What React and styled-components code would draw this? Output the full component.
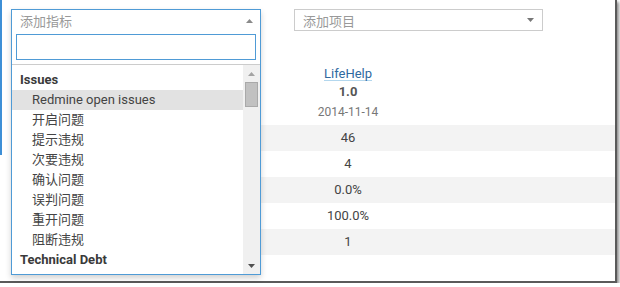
import React from 'react';
import styled, { createGlobalStyle } from 'styled-components';

const Global = createGlobalStyle`
  html, body { margin: 0; padding: 0; background: #fff; }
  body {
    font-family: Roboto, "Noto Sans CJK SC", sans-serif;
    font-size: 13px;
    color: #444;
  }
  * { box-sizing: border-box; }
`;

const Frame = styled.div`
  position: relative;
  width: 617px;
  height: 283px;
  display: flex;
  align-items: flex-start;
  background: #fff;
  border-right: 2px solid #5a5a5a;
  border-bottom: 2px solid #5a5a5a;
  box-shadow: 2px 2px 3px rgba(0, 0, 0, 0.45);
`;

const Accent = styled.div`
  width: 2px;
  height: 155px;
  flex-shrink: 0;
  background: #3d8fd6;
`;

const Content = styled.div`
  flex: 1;
  display: flex;
  flex-direction: column;
  padding: 9px 0 0 9px;
`;

const Toolbar = styled.div`
  display: flex;
  gap: 33px;
`;

const Picker = styled.div`
  position: relative;
  width: ${(p) => p.$w}px;
  height: 22px;
`;

const SelectBox = styled.div`
  width: 100%;
  height: 22px;
  border: 1px solid #ccc;
  display: flex;
  align-items: center;
  justify-content: space-between;
  padding: 0 8px;
  color: #999;
  background: #fff;
`;

const Dropdown = styled.div`
  position: absolute;
  top: 0;
  left: 0;
  width: 100%;
  border: 1px solid #4f9bd6;
  background: #fff;
  box-shadow: 0 3px 6px rgba(0, 0, 0, 0.18);
  z-index: 10;
`;

const DropHeader = styled.div`
  height: 21px;
  display: flex;
  align-items: center;
  justify-content: space-between;
  padding: 0 7px 0 8px;
  color: #999;
`;

const SearchWrap = styled.div`
  padding: 3px 4px 4px;
  border-bottom: 1px solid #ccc;
`;

const SearchInput = styled.input`
  display: block;
  width: 100%;
  height: 26px;
  border: 1px solid #4f9bd6;
  outline: none;
  padding: 0 4px;
  font: inherit;
`;

const ListArea = styled.div`
  display: flex;
  height: 209px;
`;

const Options = styled.ul`
  flex: 1;
  margin: 0;
  padding: 5px 0 0;
  list-style: none;
  overflow: hidden;
`;

const Option = styled.li`
  height: 20px;
  line-height: 20px;
  padding-left: ${(p) => (p.$group ? 8 : 20)}px;
  font-weight: ${(p) => (p.$group ? 700 : 400)};
  color: ${(p) => (p.$group ? '#3a3a3a' : '#444')};
  background: ${(p) => (p.$active ? '#e2e2e2' : 'transparent')};
  white-space: nowrap;
`;

const Scrollbar = styled.div`
  width: 17px;
  background: #f0f0f0;
  display: flex;
  flex-direction: column;
  align-items: center;
`;

const ScrollButton = styled.div`
  height: 17px;
  width: 100%;
  display: flex;
  align-items: center;
  justify-content: center;
`;

const Thumb = styled.div`
  width: 13px;
  height: 25px;
  background: #c1c1c1;
  border: 1px solid #a9a9a9;
`;

const Spacer = styled.div`
  flex: 1;
`;

const Table = styled.div`
  margin-top: 37px;
  display: grid;
  grid-template-columns: 287px 100px 1fr;
`;

const HeadCell = styled.div`
  display: flex;
  flex-direction: column;
  align-items: center;
  padding-bottom: 4px;
`;

const ProjectLink = styled.span`
  display: inline-block;
  line-height: 12px;
  color: #30699f;
  border-bottom: 1px solid #b3d7ee;
`;

const Version = styled.div`
  margin-top: 2px;
  line-height: 18px;
  font-weight: 700;
  color: #555;
`;

const DateText = styled.div`
  margin-top: 2px;
  line-height: 18px;
  font-size: 12px;
  color: #777;
`;

const Cell = styled.div`
  height: 26px;
  line-height: 26px;
  text-align: center;
  color: #444;
  background: ${(p) => (p.$stripe ? '#f3f3f3' : '#fff')};
`;

const Tri = ({ up, color }) => (
  <svg width="7" height="4" viewBox="0 0 7 4">
    <polygon points={up ? '0,4 7,4 3.5,0' : '0,0 7,0 3.5,4'} fill={color} />
  </svg>
);

const options = [
  { label: 'Issues', group: true },
  { label: 'Redmine open issues', active: true },
  { label: '开启问题' },
  { label: '提示违规' },
  { label: '次要违规' },
  { label: '确认问题' },
  { label: '误判问题' },
  { label: '重开问题' },
  { label: '阻断违规' },
  { label: 'Technical Debt', group: true },
];

const values = ['46', '4', '0.0%', '100.0%', '1'];

export default function App() {
  return (
    <>
      <Global />
      <Frame>
        <Accent />
        <Content>
          <Toolbar>
            <Picker $w={250}>
              <SelectBox>添加指标</SelectBox>
              <Dropdown>
                <DropHeader>
                  <span>添加指标</span>
                  <Tri up color="#8a8a8a" />
                </DropHeader>
                <SearchWrap>
                  <SearchInput type="text" />
                </SearchWrap>
                <ListArea>
                  <Options>
                    {options.map((o) => (
                      <Option key={o.label} $group={o.group} $active={o.active}>
                        {o.label}
                      </Option>
                    ))}
                  </Options>
                  <Scrollbar>
                    <ScrollButton>
                      <Tri up color="#a3a3a3" />
                    </ScrollButton>
                    <Thumb />
                    <Spacer />
                    <ScrollButton>
                      <Tri color="#505050" />
                    </ScrollButton>
                  </Scrollbar>
                </ListArea>
              </Dropdown>
            </Picker>
            <Picker $w={249}>
              <SelectBox>
                <span>添加项目</span>
                <Tri color="#777" />
              </SelectBox>
            </Picker>
          </Toolbar>
          <Table>
            <div />
            <HeadCell>
              <ProjectLink>LifeHelp</ProjectLink>
              <Version>1.0</Version>
              <DateText>2014-11-14</DateText>
            </HeadCell>
            <div />
            {values.map((v, i) => (
              <React.Fragment key={i}>
                <Cell $stripe={i % 2 === 0} />
                <Cell $stripe={i % 2 === 0}>{v}</Cell>
                <Cell $stripe={i % 2 === 0} />
              </React.Fragment>
            ))}
          </Table>
        </Content>
      </Frame>
    </>
  );
}
